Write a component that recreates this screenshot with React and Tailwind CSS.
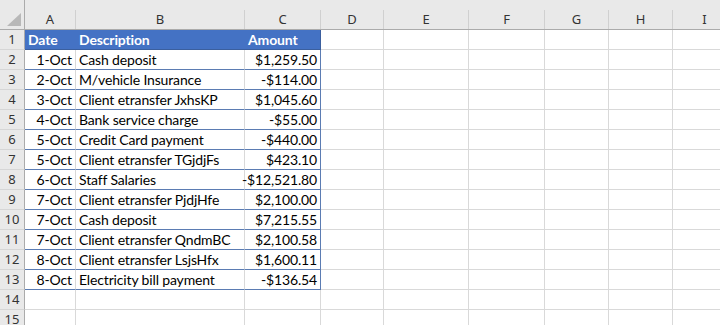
import React from "react";

const cols = [
    { key: "A", w: "w-[51px]" },
    { key: "B", w: "w-[169px]" },
    { key: "C", w: "w-[76px]" },
    { key: "D", w: "w-[63px]" },
    { key: "E", w: "w-[85px]" },
    { key: "F", w: "w-[76px]" },
    { key: "G", w: "w-[64px]" },
    { key: "H", w: "w-[64px]" },
    { key: "I", w: "w-[64px]" },
];

const rows = [
    ["1-Oct", "Cash deposit", "$1,259.50"],
    ["2-Oct", "M/vehicle Insurance", "-$114.00"],
    ["3-Oct", "Client etransfer JxhsKP", "$1,045.60"],
    ["4-Oct", "Bank service charge", "-$55.00"],
    ["5-Oct", "Credit Card payment", "-$440.00"],
    ["5-Oct", "Client etransfer TGjdjFs", "$423.10"],
    ["6-Oct", "Staff Salaries", "-$12,521.80"],
    ["7-Oct", "Client etransfer PjdjHfe", "$2,100.00"],
    ["7-Oct", "Cash deposit", "$7,215.55"],
    ["7-Oct", "Client etransfer QndmBC", "$2,100.58"],
    ["8-Oct", "Client etransfer LsjsHfx", "$1,600.11"],
    ["8-Oct", "Electricity bill payment", "-$136.54"],
];

const cellFont = "font-['Lato',sans-serif] text-[14px] tracking-[-0.15px] text-black";
const headFont = "font-['Noto_Sans',sans-serif] text-[13px] text-[#333]";

const RowHead = ({ n }) => (
    <div className={`w-[25px] h-5 shrink-0 flex items-center justify-center bg-[#e9e9e9] border-r border-b border-r-[#ababab] border-b-[#d6d6d6] ${headFont}`}>
        {n}
    </div>
);

const Empty = ({ w }) => (
    <div className={`${w} h-5 shrink-0 border-r border-b border-[#d9d9d9]`} />
);

export default function App() {
    return (
        <div className="w-[720px] h-[325px] overflow-hidden bg-white">
            {/* column headers */}
            <div className="flex h-[30px] bg-[#e9e9e9] border-b border-[#ababab]">
                <div className="w-[25px] shrink-0 flex items-end justify-end pr-[3px] pb-[3px] border-r border-[#ababab]">
                    <svg width="14" height="13" viewBox="0 0 14 13">
                        <polygon points="14,0 14,13 0,13" fill="#b8b8b8" />
                    </svg>
                </div>
                {cols.map((c) => (
                    <div key={c.key} className={`${c.w} shrink-0 flex flex-col`}>
                        <div className="h-[10px]" />
                        <div className={`flex-1 flex items-center justify-center border-r border-[#d0d0d0] ${headFont}`}>
                            {c.key}
                        </div>
                    </div>
                ))}
            </div>

            {/* row 1: table header */}
            <div className="flex">
                <RowHead n={1} />
                <div className={`w-[51px] h-5 shrink-0 bg-[#4472c4] border-b border-[#3b5f9e] pl-[3px] flex items-center font-bold ${cellFont} !text-white`}>
                    Date
                </div>
                <div className={`w-[169px] h-5 shrink-0 bg-[#4472c4] border-b border-[#3b5f9e] pl-[3px] flex items-center font-bold ${cellFont} !text-white`}>
                    Description
                </div>
                <div className={`w-[76px] h-5 shrink-0 bg-[#4472c4] border-b border-r border-[#3b5f9e] pl-[3px] flex items-center font-bold ${cellFont} !text-white`}>
                    Amount
                </div>
                {cols.slice(3).map((c) => (
                    <Empty key={c.key} w={c.w} />
                ))}
            </div>

            {rows.map((r, i) => (
                <div key={i} className="flex">
                    <RowHead n={i + 2} />
                    <div className={`w-[51px] h-5 shrink-0 border-b border-b-[#5b7cb3] border-r border-r-[#d9d9d9] pr-[3px] flex items-center justify-end ${cellFont}`}>
                        {r[0]}
                    </div>
                    <div className={`w-[169px] h-5 shrink-0 border-b border-b-[#5b7cb3] border-r border-r-[#d9d9d9] pl-[3px] flex items-center whitespace-nowrap ${cellFont}`}>
                        {r[1]}
                    </div>
                    <div className={`w-[76px] h-5 shrink-0 border-b border-r border-[#5b7cb3] pr-[3px] flex items-center justify-end ${cellFont}`}>
                        {r[2]}
                    </div>
                    {cols.slice(3).map((c) => (
                        <Empty key={c.key} w={c.w} />
                    ))}
                </div>
            ))}

            {[14, 15].map((n) => (
                <div key={n} className="flex">
                    <RowHead n={n} />
                    {cols.map((c) => (
                        <Empty key={c.key} w={c.w} />
                    ))}
                </div>
            ))}
        </div>
    );
}
